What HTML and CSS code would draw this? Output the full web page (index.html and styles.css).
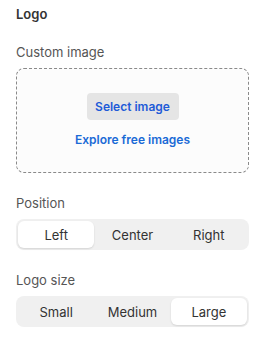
FILE: index.html
```html
<!DOCTYPE html>
<html lang="en">
<head>
    <meta charset="UTF-8">
    <meta name="viewport" content="width=device-width, initial-scale=1.0">
    <title>Logo</title>
    <link rel="stylesheet" href="styles.css">
</head>
<body>
    <div class="panel">
        <h2 class="panel-title">Logo</h2>

        <div class="field">
            <div class="field-label">Custom image</div>
            <div class="dropzone">
                <button class="select-btn">Select image</button>
                <a class="explore-link" href="#">Explore free images</a>
            </div>
        </div>

        <div class="field">
            <div class="field-label">Position</div>
            <div class="segmented">
                <button class="segment active">Left</button>
                <button class="segment">Center</button>
                <button class="segment">Right</button>
            </div>
        </div>

        <div class="field">
            <div class="field-label">Logo size</div>
            <div class="segmented">
                <button class="segment">Small</button>
                <button class="segment">Medium</button>
                <button class="segment active">Large</button>
            </div>
        </div>
    </div>
</body>
</html>
```

FILE: styles.css
```css
* {
    margin: 0;
    padding: 0;
    box-sizing: border-box;
}

body {
    font-family: Inter, 'Noto Sans', sans-serif;
    background: white;
    color: #333;
}

.panel {
    padding: 6px 16px 0 16px;
}

.panel-title {
    font-size: 13px;
    font-weight: 600;
    color: #333;
    line-height: 16px;
    margin-bottom: 22px;
}

.field {
    margin-bottom: 22px;
}

.field-label {
    font-size: 13px;
    color: #555;
    line-height: 17px;
    margin-bottom: 7px;
}

.dropzone {
    height: 105px;
    border: 1px dashed #8a8a8a;
    border-radius: 8px;
    background: #fcfcfc;
    display: flex;
    flex-direction: column;
    align-items: center;
    padding-top: 24px;
}

.select-btn {
    font-family: inherit;
    width: 92px;
    height: 27px;
    border: none;
    border-radius: 4px;
    background: #e5e5e5;
    color: #1e5bd8;
    font-size: 12px;
    font-weight: 600;
    cursor: pointer;
}

.explore-link {
    margin-top: 12px;
    color: #1a6ad6;
    font-size: 12px;
    font-weight: 600;
    text-decoration: none;
}

.segmented {
    display: flex;
    height: 31px;
    padding: 2px;
    background: #f0f0f0;
    border-radius: 8px;
}

.segment {
    flex: 1;
    font-family: inherit;
    font-size: 13px;
    color: #333;
    border: none;
    background: transparent;
    border-radius: 6px;
    cursor: pointer;
}

.segment.active {
    background: white;
    box-shadow: 0 1px 2px rgba(0,0,0,0.12);
}
```
